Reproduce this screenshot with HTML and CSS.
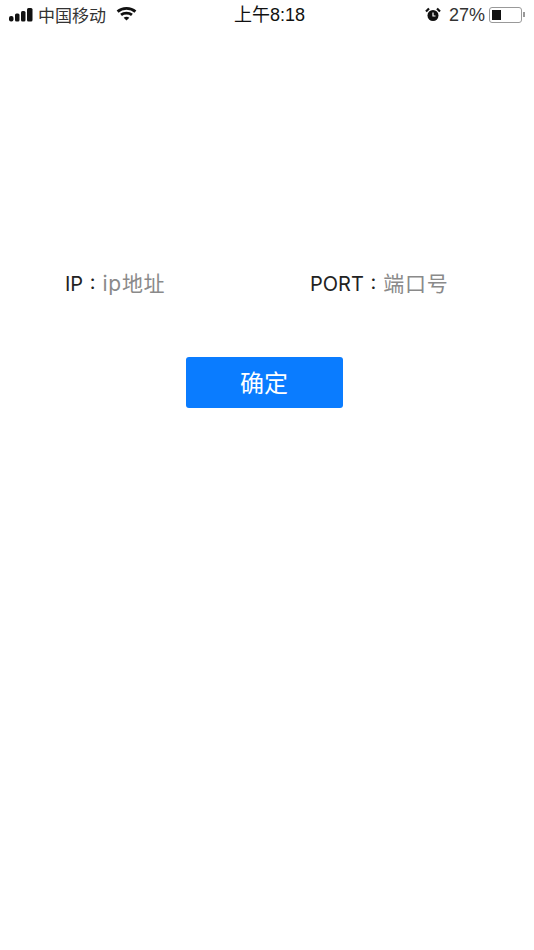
FILE: index.html
```html
<!DOCTYPE html>
<html lang="zh-CN">

<head>
    <meta charset="UTF-8">
    <meta name="viewport" content="width=device-width, initial-scale=1.0">
    <title>确定</title>
    <link rel="stylesheet" href="styles.css">
</head>

<body>
    <div class="status-bar">
        <div class="status-left">
            <svg class="signal" width="24" height="14" viewBox="0 0 24 14">
                <rect x="0" y="8" width="4.500" height="5.500" rx="2" />
                <rect x="6" y="5.500" width="4.500" height="8" rx="1.500" />
                <rect x="12" y="3" width="4.500" height="10.500" rx="1.500" />
                <rect x="18" y="0" width="5.500" height="13.500" rx="1.500" />
            </svg>
            <span class="carrier">中国移动</span>
            <svg class="wifi" width="21" height="15" viewBox="0 0 22 16">
                <path d="M1.500 6C6.500 1.500 15.500 1.500 20.500 6" fill="none" stroke="#111" stroke-width="3" />
                <path d="M5.200 9.500C8.300 6.900 13.700 6.900 16.800 9.500" fill="none" stroke="#111" stroke-width="3" />
                <path d="M8 12.500L11 15.500 14 12.500C12.300 11 9.700 11 8 12.500Z" fill="#111" />
            </svg>
        </div>
        <div class="status-time">上午8:18</div>
        <div class="status-right">
            <svg class="alarm" width="16" height="15" viewBox="0 0 16 15">
                <circle cx="8" cy="8.500" r="5.500" fill="#111" />
                <path d="M8 5.500V9H10.500" fill="none" stroke="#fff" stroke-width="1.200" />
                <path d="M1 4.500L4 1.500M15 4.500L12 1.500" stroke="#111" stroke-width="2.200" />
            </svg>
            <span class="battery-text">27%</span>
            <div class="battery">
                <div class="battery-body">
                    <div class="battery-level"></div>
                </div>
                <div class="battery-tip"></div>
            </div>
        </div>
    </div>

    <div class="form-row">
        <div class="field field-ip">
            <span class="field-label">IP :</span>
            <span class="placeholder">ip地址</span>
        </div>
        <div class="field field-port">
            <span class="field-label">PORT :</span>
            <span class="placeholder">端口号</span>
        </div>
    </div>

    <div class="button-row">
        <button class="confirm-btn">确定</button>
    </div>
</body>

</html>
```

FILE: styles.css
```css
body {
    margin: 0;
    height: 950px;
    background-color: #fff;
    font-family: Inter, "Noto Sans CJK SC", sans-serif;
    color: #111;
    overflow: hidden;
}

.status-bar {
    display: grid;
    grid-template-columns: 1fr auto 1fr;
    align-items: center;
    height: 29px;
    padding: 0 9px 0 9px;
    font-family: "Liberation Sans", "Noto Sans CJK SC", sans-serif;
    font-size: 17px;
}

.status-left {
    display: flex;
    align-items: center;
}

.signal {
    fill: #111;
}

.carrier {
    margin-left: 5px;
    color: #333;
}

.wifi {
    margin-left: 10px;
    margin-bottom: 2px;
}

.status-time {
    padding-left: 5px;
    padding-bottom: 3px;
    font-size: 18px;
    color: #111;
}

.status-right {
    display: flex;
    align-items: center;
    justify-content: flex-end;
}

.battery-text {
    margin-left: 8px;
    padding-top: 2px;
    font-size: 18px;
    color: #333;
}

.battery {
    display: flex;
    align-items: center;
    margin-left: 4px;
}

.battery-body {
    width: 33px;
    height: 16px;
    padding: 2px;
    box-sizing: border-box;
    border: 1px solid #999;
    border-radius: 3px;
}

.battery-level {
    width: 9px;
    height: 100%;
    background-color: #111;
}

.battery-tip {
    width: 2px;
    height: 5px;
    margin-left: 1px;
    background-color: #999;
}

.form-row {
    display: flex;
    margin-top: 244px;
    padding-left: 65px;
    font-size: 20px;
    line-height: 22px;
}

.field {
    display: flex;
    gap: 7px;
}

.field-ip {
    width: 245px;
}

.field-label {
    color: #222;
    word-spacing: 1px;
}

.placeholder {
    font-size: 21px;
    letter-spacing: 0.7px;
    color: #8a8a8a;
}

.button-row {
    display: flex;
    justify-content: center;
    margin-top: 62px;
    padding-right: 6px;
}

.confirm-btn {
    width: 157px;
    height: 51px;
    padding: 0 0 2px;
    font-family: inherit;
    font-size: 24px;
    color: #fff;
    background-color: #0a7cff;
    border: none;
    border-radius: 3px;
}
```
